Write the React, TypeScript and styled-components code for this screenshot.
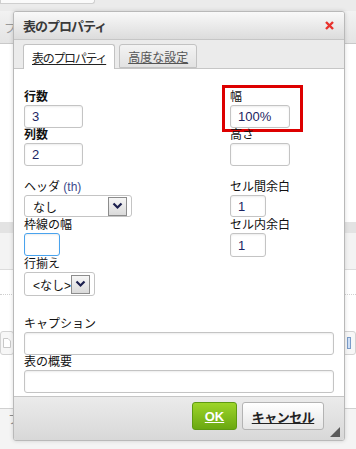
import React from "react";
import styled, { createGlobalStyle } from "styled-components";

const GlobalStyle = createGlobalStyle`
  html, body {
    margin: 0;
    padding: 0;
    overflow: hidden;
    background: #fff;
  }
  body {
    font-family: "Liberation Sans", "Noto Sans CJK JP", sans-serif;
    font-size: 12px;
    color: #000;
  }
`;

const font = `"Liberation Sans", "Noto Sans CJK JP", sans-serif`;

/* ---------- editor behind the dialog ---------- */

const Page = styled.div`
  position: relative;
  width: 356px;
  height: 449px;
  overflow: hidden;
  display: flex;
  flex-direction: column;
  background: #fff;
`;

const TopStrip = styled.div`
  height: 11px;
  background: #ebebeb;
  flex-shrink: 0;
`;

const TopBox = styled.div`
  width: 93px;
  height: 3px;
  background: #fafafa;
  border: 1px solid #cfcfcf;
  border-top: 0;
  border-radius: 0 0 3px 0;
`;

const EditorToolbar = styled.div`
  height: 32px;
  flex-shrink: 0;
  background: linear-gradient(#f2f2f2, #e4e4e4);
  border-bottom: 1px solid #c9c9c9;
  display: flex;
  align-items: center;
  padding-left: 4px;
  color: #9a9a9a;
  font-size: 12px;
`;

const Band = styled.div<{ $h: number; $bg: string; $line?: string }>`
  height: ${(p) => p.$h}px;
  flex-shrink: 0;
  background: ${(p) => p.$bg};
  border-bottom: ${(p) => (p.$line ? p.$line : "0")};
  box-sizing: border-box;
  display: flex;
  align-items: center;
  justify-content: space-between;
`;

const SideButton = styled.div`
  width: 14px;
  height: 24px;
  border: 1px solid #d3d3d3;
  border-radius: 3px;
  background: #f7f7f7;
  box-sizing: border-box;
  display: flex;
  align-items: center;
  justify-content: center;
`;

const BottomBar = styled.div`
  flex: 1;
  background: #f4f4f4;
  border-top: 1px solid #d0d0d0;
  display: flex;
  align-items: flex-start;
  padding: 2px 0 0 8px;
  gap: 10px;
  color: #8d8d8d;
  font-size: 12px;
`;

const BarItem = styled.div<{ $w: number }>`
  width: ${(p) => p.$w}px;
  display: flex;
  align-items: center;
  justify-content: space-between;
  padding-right: 6px;
  border-right: 1px solid #d6d6d6;
  height: 14px;
`;

/* ---------- dialog ---------- */

const Dialog = styled.div`
  position: absolute;
  left: 13px;
  top: 11px;
  width: 332px;
  height: 430px;
  box-sizing: border-box;
  border: 1px solid #b9b9b9;
  border-radius: 3px;
  box-shadow: 0 0 4px rgba(0, 0, 0, 0.15);
  background: #fff;
  display: flex;
  flex-direction: column;
  overflow: hidden;
  font-family: ${font};
`;

const TitleBar = styled.div`
  height: 27px;
  flex-shrink: 0;
  background: linear-gradient(#f9f9f9, #dcdcdc);
  border-bottom: 1px solid #c6c6c6;
  display: flex;
  align-items: center;
  justify-content: space-between;
  padding: 0 10px 0 9px;
`;

const Title = styled.div`
  font-size: 13px;
  font-weight: bold;
  color: #3a3a3a;
  letter-spacing: -1px;
`;

const TabBar = styled.div`
  height: 29px;
  flex-shrink: 0;
  background: #ebebeb;
  border-bottom: 1px solid #c6c6c6;
  display: flex;
  align-items: flex-end;
  gap: 4px;
  padding-left: 9px;
  box-sizing: border-box;
`;

const Tab = styled.div<{ $active?: boolean; $tight?: number }>`
  height: ${(p) => (p.$active ? 25 : 24)}px;
  margin-bottom: ${(p) => (p.$active ? -1 : 0)}px;
  padding: 0 8px;
  box-sizing: border-box;
  border: 1px solid #c2c2c2;
  border-bottom: ${(p) => (p.$active ? "0" : "1px solid #c2c2c2")};
  border-radius: 3px 3px 0 0;
  background: ${(p) => (p.$active ? "#fff" : "linear-gradient(#f3f3f3, #e2e2e2)")};
  color: ${(p) => (p.$active ? "#222" : "#555")};
  font-size: 12px;
  letter-spacing: ${(p) => p.$tight ?? 0}px;
  text-decoration: underline;
  display: flex;
  align-items: center;
`;

const Body = styled.div`
  flex: 1;
  padding: 21px 10px 0 10px;
  box-sizing: border-box;
`;

const Row = styled.div<{ $top?: number }>`
  display: grid;
  grid-template-columns: 206px auto;
  margin-top: ${(p) => p.$top ?? 0}px;
`;

const Field = styled.div<{ $top?: number }>`
  position: relative;
  display: flex;
  flex-direction: column;
  align-items: flex-start;
  margin-top: ${(p) => p.$top ?? 0}px;
`;

const Label = styled.div<{ $bold?: boolean }>`
  height: 14px;
  line-height: 14px;
  font-size: 12px;
  font-weight: ${(p) => (p.$bold ? "bold" : "normal")};
  color: #111;
  white-space: nowrap;
`;

const Latin = styled.span`
  color: #3c4a8c;
`;

const TextBox = styled.div<{ $w: number; $h?: number; $focus?: boolean }>`
  width: ${(p) => p.$w}px;
  height: ${(p) => p.$h ?? 23}px;
  margin-top: 1px;
  box-sizing: border-box;
  border: 1px solid ${(p) => (p.$focus ? "#49a3ee" : "#c4c4c4")};
  border-radius: 3px;
  box-shadow: inset 0 1px 2px rgba(0, 0, 0, 0.08);
  background: #fff;
  padding: 0 7px;
  display: flex;
  align-items: center;
  font-size: 13px;
  color: #1c2463;
`;

const Select = styled.div<{ $w: number; $h: number }>`
  width: ${(p) => p.$w}px;
  height: ${(p) => p.$h}px;
  margin-top: 1px;
  box-sizing: border-box;
  border: 1px solid #c4c4c4;
  border-radius: 3px;
  background: #fff;
  display: flex;
  align-items: center;
  justify-content: space-between;
  padding: 0 4px 0 8px;
  font-size: 12px;
  color: #111;
`;

const ArrowBox = styled.div<{ $s: number }>`
  width: ${(p) => p.$s}px;
  height: ${(p) => p.$s}px;
  box-sizing: border-box;
  border: 1px solid #8c8c8c;
  background: linear-gradient(#f6f6f6, #dadada);
  display: flex;
  align-items: center;
  justify-content: center;
`;

const Highlight = styled.div`
  position: absolute;
  left: -8px;
  top: -5px;
  width: 81px;
  height: 47px;
  box-sizing: border-box;
  border: 3px solid #dd0000;
  pointer-events: none;
`;

const Footer = styled.div`
  position: relative;
  height: 38px;
  flex-shrink: 0;
  background: linear-gradient(#ebebeb, #d8d8d8);
  border-top: 1px solid #c6c6c6;
  display: flex;
  justify-content: flex-end;
  align-items: flex-start;
  gap: 5px;
  padding: 5px 20px 0 0;
`;

const Button = styled.div<{ $primary?: boolean }>`
  height: 28px;
  box-sizing: border-box;
  border-radius: 3px;
  border: 1px solid ${(p) => (p.$primary ? "#5e9a12" : "#b3b3b3")};
  background: ${(p) =>
    p.$primary
      ? "linear-gradient(#9dd52a, #6aa811)"
      : "linear-gradient(#ffffff, #e6e6e6)"};
  color: ${(p) => (p.$primary ? "#fff" : "#222")};
  font-weight: bold;
  font-size: 13px;
  text-decoration: underline;
  display: flex;
  align-items: center;
  justify-content: center;
  width: ${(p) => (p.$primary ? 45 : 82)}px;
  letter-spacing: ${(p) => (p.$primary ? 0 : -0.5)}px;
`;

const Resize = styled.div`
  position: absolute;
  right: 4px;
  bottom: 3px;
  width: 0;
  height: 0;
  border-left: 10px solid transparent;
  border-bottom: 10px solid #5a5a5a;
`;

const Chevron = () => (
  <svg width="11" height="8" viewBox="0 0 11 8">
    <path d="M1.5 1.5 L5.5 5.5 L9.5 1.5" fill="none" stroke="#1b1f4e" strokeWidth="2.2" />
  </svg>
);

const CloseIcon = () => (
  <svg width="9" height="9" viewBox="0 0 9 9">
    <path d="M1 1 L8 8 M8 1 L1 8" stroke="#e8322d" strokeWidth="2.4" />
  </svg>
);

const Dot = ({ c }: { c: string }) => (
  <svg width="14" height="10" viewBox="0 0 14 10">
    <rect x="0" y="0" width="14" height="10" fill={c} rx="1" />
  </svg>
);

export default function App() {
  return (
    <>
      <GlobalStyle />
      <Page>
        <TopStrip>
          <TopBox />
        </TopStrip>
        <EditorToolbar>フ</EditorToolbar>
        <Band $h={178} $bg="#fff" />
        <Band $h={11} $bg="#e3e3e3" />
        <Band $h={37} $bg="#f3f3f3" $line="1px solid #dcdcdc" />
        <Band $h={25} $bg="#fff" $line="1px dotted #d0d0d0" />
        <Band $h={35} $bg="#fff" />
        <Band $h={26} $bg="#fff">
          <SideButton>
            <svg width="8" height="10" viewBox="0 0 8 10">
              <path d="M0.5 0.5 H5 L7.5 3 V9.5 H0.5 Z" fill="#fff" stroke="#c8c8c8" />
            </svg>
          </SideButton>
          <SideButton>
            <svg width="4" height="12" viewBox="0 0 4 12">
              <rect x="0.5" y="0.5" width="3" height="11" fill="#cfe0f7" stroke="#7a9cc9" />
            </svg>
          </SideButton>
        </Band>
        <Band $h={52} $bg="#fff" />
        <BottomBar>
          <BarItem $w={70}>
            フォント<span style={{ fontSize: 7 }}>▼</span>
          </BarItem>
          <BarItem $w={50}>
            サ...<span style={{ fontSize: 7 }}>▼</span>
          </BarItem>
          <BarItem $w={70}>
            <Dot c="#c9b7e0" />
            <Dot c="#f08a8a" />
          </BarItem>
          <BarItem $w={50}>
            <Dot c="#8fc58f" />
            <Dot c="#a9c4e6" />
          </BarItem>
          <Dot c="#9fb5db" />
        </BottomBar>

        <Dialog>
          <TitleBar>
            <Title>表のプロパティ</Title>
            <CloseIcon />
          </TitleBar>
          <TabBar>
            <Tab $active $tight={-1.3}>
              表のプロパティ
            </Tab>
            <Tab>高度な設定</Tab>
          </TabBar>
          <Body>
            <Row>
              <Field>
                <Label $bold>行数</Label>
                <TextBox $w={59}>3</TextBox>
              </Field>
              <Field>
                <Highlight />
                <Label>幅</Label>
                <TextBox $w={60}>100%</TextBox>
              </Field>
            </Row>
            <Row>
              <Field>
                <Label $bold>列数</Label>
                <TextBox $w={59}>2</TextBox>
              </Field>
              <Field>
                <Label>高さ</Label>
                <TextBox $w={60} />
              </Field>
            </Row>
            <Row $top={14}>
              <Field>
                <Label>
                  ヘッダ <Latin>(th)</Latin>
                </Label>
                <Select $w={108} $h={22}>
                  なし
                  <ArrowBox $s={19}>
                    <Chevron />
                  </ArrowBox>
                </Select>
              </Field>
              <Field>
                <Label>セル間余白</Label>
                <TextBox $w={36} $h={22}>
                  1
                </TextBox>
              </Field>
            </Row>
            <Row $top={1}>
              <Field>
                <Label>枠線の幅</Label>
                <TextBox $w={36} $focus />
              </Field>
              <Field>
                <Label>セル内余白</Label>
                <TextBox $w={36} $h={24}>
                  1
                </TextBox>
              </Field>
            </Row>
            <Row>
              <Field>
                <Label>行揃え</Label>
                <Select $w={71} $h={24}>
                  &lt;なし&gt;
                  <ArrowBox $s={19}>
                    <Chevron />
                  </ArrowBox>
                </Select>
              </Field>
            </Row>
            <Field $top={21}>
              <Label>キャプション</Label>
              <TextBox $w={310} />
            </Field>
            <Field>
              <Label>表の概要</Label>
              <TextBox $w={310} />
            </Field>
          </Body>
          <Footer>
            <Button $primary>OK</Button>
            <Button>キャンセル</Button>
            <Resize />
          </Footer>
        </Dialog>
      </Page>
    </>
  );
}
